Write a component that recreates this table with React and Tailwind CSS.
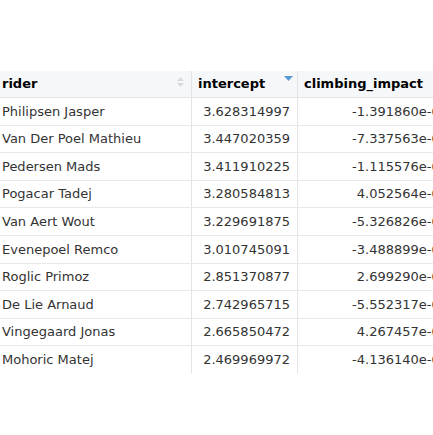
import React from "react";

const rows = [
  ["Philipsen Jasper", "3.628314997", "-1.391860e-01"],
  ["Van Der Poel Mathieu", "3.447020359", "-7.337563e-02"],
  ["Pedersen Mads", "3.411910225", "-1.115576e-01"],
  ["Pogacar Tadej", "3.280584813", "4.052564e-02"],
  ["Van Aert Wout", "3.229691875", "-5.326826e-02"],
  ["Evenepoel Remco", "3.010745091", "-3.488899e-02"],
  ["Roglic Primoz", "2.851370877", "2.699290e-02"],
  ["De Lie Arnaud", "2.742965715", "-5.552317e-02"],
  ["Vingegaard Jonas", "2.665850472", "4.267457e-02"],
  ["Mohoric Matej", "2.469969972", "-4.136140e-02"],
];

export default function App() {
  return (
    <div
      className="w-[433px] h-[435px] bg-white overflow-hidden text-[13px] text-[#333]"
      style={{ fontFamily: "'DejaVu Sans', sans-serif" }}
    >
      <div className="pt-[71px] w-[560px]">
        <div className="flex h-[27px] bg-[#f6f7f9] border-b border-[#e4e4e4] text-black font-bold">
          <div className="w-[192px] shrink-0 border-r border-[#e4e4e4] flex items-center justify-between pl-[2px] pr-[7px]">
            <span>rider</span>
            <svg width="7" height="12" viewBox="0 0 7 12" className="-mt-[4px]">
              <path d="M0 5 L3.5 1 L7 5 Z" fill="#d9dbe0" />
              <path d="M0 7 L3.5 11 L7 7 Z" fill="#d9dbe0" />
            </svg>
          </div>
          <div className="w-[106px] shrink-0 border-r border-[#e4e4e4] flex items-center justify-between pl-[6px] pr-[4px]">
            <span>intercept</span>
            <svg width="9" height="6" viewBox="0 0 9 6" className="-mt-[10px]">
              <path d="M0 0 L9 0 L4.5 5 Z" fill="#5b9bd5" />
            </svg>
          </div>
          <div className="w-[156px] shrink-0 flex items-center pl-[6px]">
            <span>climbing_impact</span>
          </div>
        </div>
        {rows.map((r, i) => (
          <div
            key={i}
            className={
              i < rows.length - 1
                ? "flex h-[27.6px] border-b border-[#e9e9e9]"
                : "flex h-[27.6px]"
            }
          >
            <div className="w-[192px] shrink-0 border-r border-[#e4e4e4] flex items-center pl-[2px]">
              {r[0]}
            </div>
            <div className="w-[106px] shrink-0 border-r border-[#e4e4e4] flex items-center justify-end pr-[7px]">
              {r[1]}
            </div>
            <div className="w-[156px] shrink-0 flex items-center justify-end pr-[6px]">
              {r[2]}
            </div>
          </div>
        ))}
      </div>
    </div>
  );
}
